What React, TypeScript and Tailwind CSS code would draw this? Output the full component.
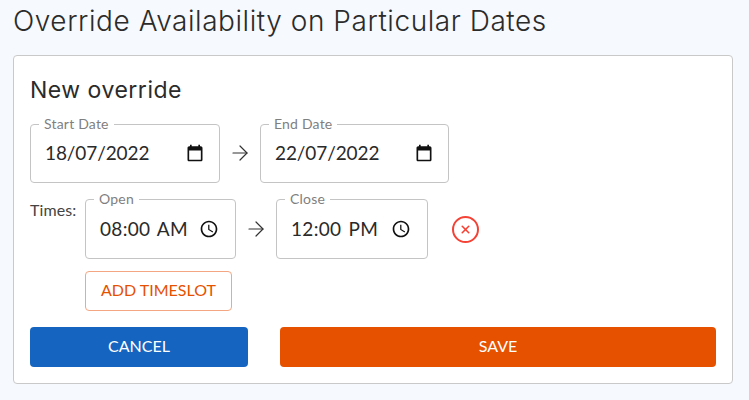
import { ArrowRight, X } from 'lucide-react';

function CalendarGlyph() {
    return (
        <svg width="20" height="20" viewBox="0 0 24 24" fill="#111">
            <path d="M19 4h-1V2h-2v2H8V2H6v2H5c-1.1 0-2 .9-2 2v14c0 1.1.9 2 2 2h14c1.1 0 2-.9 2-2V6c0-1.1-.9-2-2-2zm0 16H5V9h14v11z" />
        </svg>
    );
}

function ClockGlyph() {
    return (
        <svg width="20" height="20" viewBox="0 0 24 24" fill="#111">
            <path d="M11.99 2C6.47 2 2 6.48 2 12s4.47 10 9.99 10C17.52 22 22 17.52 22 12S17.52 2 11.99 2zM12 20c-4.42 0-8-3.58-8-8s3.58-8 8-8 8 3.58 8 8-3.58 8-8 8z" />
            <path d="M12.5 7H11v6l5.25 3.15.75-1.23-4.5-2.67z" />
        </svg>
    );
}

function DateField({ label, value, width }: { label: string; value: string; width: string }) {
    return (
        <fieldset className={`${width} h-[66px] shrink-0 border border-[#c4c4c4] rounded-[4px] px-[14px] m-0 min-w-0`}>
            <legend className="ml-[-6px] px-[5px] text-[14px] leading-[14px] tracking-[0.2px] text-[#7f7f7f]">{label}</legend>
            <div className="flex items-center justify-between h-[44px] text-[19px] text-[#2a2a2a]">
                <span className="tracking-[-0.1px]">{value}</span>
                <CalendarGlyph />
            </div>
        </fieldset>
    );
}

function TimeField({ label, value, width }: { label: string; value: string; width: string }) {
    return (
        <fieldset className={`${width} h-[67px] shrink-0 border border-[#c4c4c4] rounded-[4px] pl-[14px] pr-[16px] m-0 min-w-0`}>
            <legend className="ml-[-6px] px-[5px] text-[14px] leading-[14px] tracking-[0.2px] text-[#7f7f7f]">{label}</legend>
            <div className="flex items-center justify-between h-[46px] text-[19px] text-[#2a2a2a]">
                <span className="tracking-[0.3px] [word-spacing:2px]">{value}</span>
                <ClockGlyph />
            </div>
        </fieldset>
    );
}

export default function App() {
    return (
        <div className="w-[749px] h-[400px] overflow-hidden bg-[#f6f9fd] px-[13px] font-['Lato','Open_Sans',sans-serif]">
            <h1 className="h-[55px] pt-[3px] text-[28px] leading-[36px] text-[#2b2b2b] font-['Inter',sans-serif] font-light tracking-[0.55px] whitespace-nowrap">
                Override Availability on Particular Dates
            </h1>

            <div className="w-[720px] h-[329px] bg-white border border-[#c9c9c9] rounded-[4px] px-[16px] pt-[19px]">
                <h2 className="h-[30px] text-[23px] leading-[30px] text-[#2b2b2b] font-['Inter',sans-serif] tracking-[0.5px]">New override</h2>

                <div className="flex items-center mt-[12px]">
                    <DateField label="Start Date" value="18/07/2022" width="w-[190px]" />
                    <div className="w-[40px] flex justify-center pt-[5px]">
                        <ArrowRight size={24} strokeWidth={1.2} color="#333" />
                    </div>
                    <DateField label="End Date" value="22/07/2022" width="w-[189px]" />
                </div>

                <div className="flex mt-[9px]">
                    <span className="w-[55px] pt-[8px] text-[16px] leading-[20px] tracking-[0.1px] text-[#444]">Times:</span>
                    <div>
                        <div className="flex items-center">
                            <TimeField label="Open" value="08:00 AM" width="w-[151px]" />
                            <div className="w-[40px] flex justify-center pt-[7px]">
                                <ArrowRight size={24} strokeWidth={1.2} color="#333" />
                            </div>
                            <TimeField label="Close" value="12:00 PM" width="w-[152px]" />
                            <div className="ml-[24px] mt-[7px] w-[27px] h-[27px] rounded-full border-2 border-[#f44336] flex items-center justify-center">
                                <X size={13} strokeWidth={3} color="#f44336" />
                            </div>
                        </div>
                        <button className="mt-[12px] w-[147px] h-[40px] pb-[2px] border border-[#f4a582] rounded-[4px] text-[16px] text-[#e65100] bg-white">
                            ADD TIMESLOT
                        </button>
                    </div>
                </div>

                <div className="flex justify-between mt-[16px]">
                    <button className="w-[218px] h-[40px] pb-[2px] rounded-[4px] bg-[#1565c0] text-white text-[16px]">CANCEL</button>
                    <button className="w-[436px] h-[40px] pb-[2px] rounded-[4px] bg-[#e65100] text-white text-[16px]">SAVE</button>
                </div>
            </div>
        </div>
    );
}
